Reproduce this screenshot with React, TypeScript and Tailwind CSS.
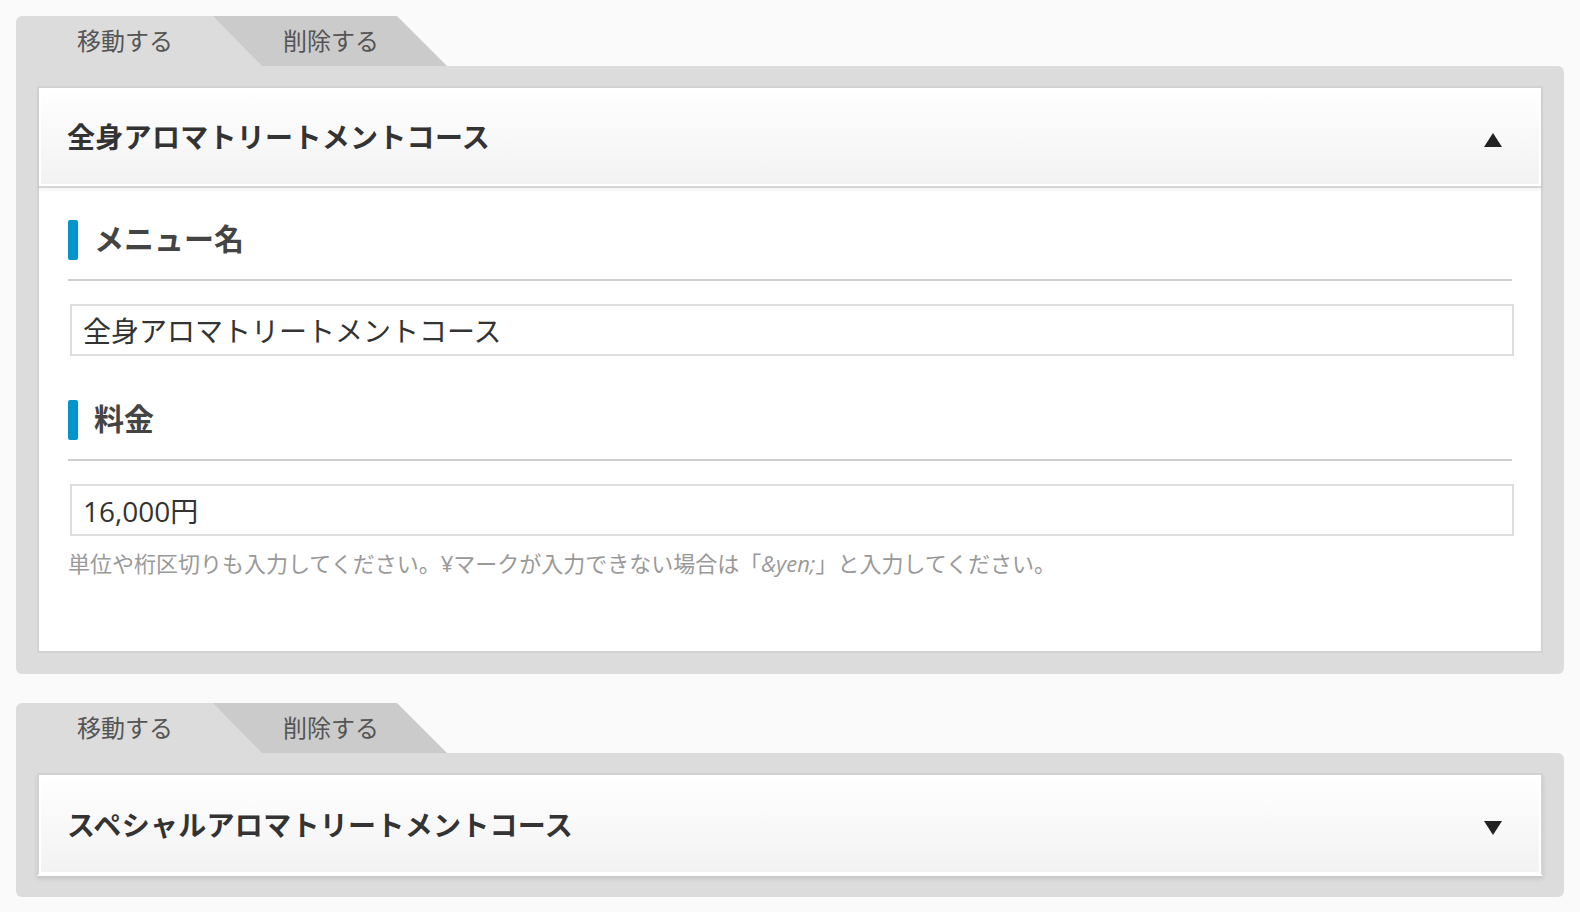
import { useState } from "react";

type Menu = {
  id: number;
  name: string;
  price: string;
};

const menus: Menu[] = [
  { id: 1, name: "全身アロマトリートメントコース", price: "16,000円" },
  { id: 2, name: "スペシャルアロマトリートメントコース", price: "20,000円" },
];

function Caret({ open }: { open: boolean }) {
  return (
    <svg width="18" height="14" viewBox="0 0 18 14" className="mt-[6px] shrink-0">
      {open ? (
        <polygon points="9,0 18,14 0,14" fill="#222" />
      ) : (
        <polygon points="0,0 18,0 9,14" fill="#222" />
      )}
    </svg>
  );
}

function FieldLabel({ children }: { children: React.ReactNode }) {
  return (
    <div className="box-content flex h-[40px] items-center gap-[16px] border-b-2 border-[#cfcfcf] pb-[19px]">
      <span className="h-[40px] w-[10px] rounded-[2px] bg-[#0096cc]" />
      <span className="-mt-[3px] text-[30px] font-bold text-[#444]">{children}</span>
    </div>
  );
}

function MenuPanel({ menu, defaultOpen }: { menu: Menu; defaultOpen: boolean }) {
  const [open, setOpen] = useState(defaultOpen);

  return (
    <div>
      {/* tabs */}
      <div className="flex h-[50px]">
        <button className="relative z-10 flex h-full w-[246px] items-center rounded-tl-md bg-[#dcdcdc] pl-[61px] text-[24px] text-[#555] [clip-path:polygon(0_0,197px_0,100%_100%,0_100%)]">
          移動する
        </button>
        <button className="-ml-[49px] flex h-full w-[234px] items-center bg-[#cbcbcb] pl-[70px] text-[24px] text-[#555] [clip-path:polygon(0_0,184px_0,100%_100%,0_100%)]">
          削除する
        </button>
      </div>

      <div className="rounded-tr-md rounded-b-md bg-[#dcdcdc] px-[21px] pt-5 pb-[21px]">
        <div
          className={
            "border-2 bg-white " +
            (open ? "border-[#d2d2d2]" : "border-[#d2d2d2] border-b-white shadow-[0_3px_4px_rgba(0,0,0,0.1)]")
          }
        >
          <div
            onClick={() => setOpen(!open)}
            className={
              "flex cursor-pointer items-center justify-between bg-linear-to-b from-white to-[#f2f2f2] pl-[28px] pr-[39px] " +
              (open
                ? "h-[100px] border-b-2 border-[#d6d6d6] shadow-[inset_0_0_0_2px_#fff,0_2px_4px_rgba(0,0,0,0.06)]"
                : "h-[99px] shadow-[inset_0_0_0_2px_#fff]")
            }
          >
            <h2 className="text-[28px] font-bold tracking-[0.3px] text-[#333]">{menu.name}</h2>
            <Caret open={open} />
          </div>

          {open && (
            <div className="px-[29px] pt-[32px] pb-[73px]">
              <FieldLabel>メニュー名</FieldLabel>
              <input
                readOnly
                defaultValue={menu.name}
                className="mt-[23px] ml-[2px] block h-[52px] w-full border-2 border-[#dddddd] bg-white pl-[11px] text-[28px] text-[#333] outline-none"
              />

              <div className="mt-[44px]">
                <FieldLabel>料金</FieldLabel>
              </div>
              <input
                readOnly
                defaultValue={menu.price}
                className="mt-[23px] ml-[2px] block h-[52px] w-full border-2 border-[#dddddd] bg-white pl-[11px] text-[28px] text-[#333] outline-none"
              />
              <p className="mt-[12px] text-[22px] leading-[30px] text-[#999]">
                単位や桁区切りも入力してください。¥マークが入力できない場合は「<i>&amp;yen;</i>」と入力してください。
              </p>
            </div>
          )}
        </div>
      </div>
    </div>
  );
}

export default function App() {
  return (
    <div className="min-h-screen bg-[#fafafa] px-4 pt-4 font-['Open_Sans','Noto_Sans_CJK_JP',sans-serif]">
      <div className="flex flex-col gap-[29px]">
        {menus.map((m, i) => (
          <MenuPanel key={m.id} menu={m} defaultOpen={i === 0} />
        ))}
      </div>
    </div>
  );
}
